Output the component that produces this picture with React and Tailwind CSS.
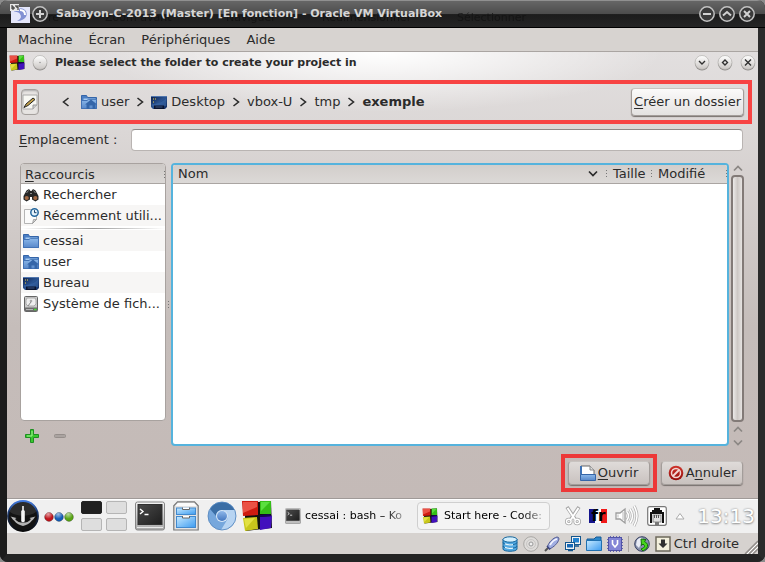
import React from "react";

function Svg({ w = 16, h = 16, vw = w, vh = h, children }) {
  return (
    <svg width={w} height={h} viewBox={`0 0 ${vw} ${vh}`} className="block shrink-0" aria-hidden="true">
      {children}
    </svg>
  );
}

function Gradients() {
  return (
    <svg width="0" height="0" className="absolute" aria-hidden="true">
      <defs>
        <linearGradient id="blue" x2="0" y2="1"><stop stopColor="#8db9ea" /><stop offset="1" stopColor="#5888ca" /></linearGradient>
        <linearGradient id="screen" x2="1" y2="1"><stop stopColor="#0b1f4d" /><stop offset=".5" stopColor="#2a5391" /><stop offset="1" stopColor="#10295c" /></linearGradient>
        <linearGradient id="knob" x2="0" y2="1"><stop stopColor="#ffffff" /><stop offset="1" stopColor="#c9c5c2" /></linearGradient>
        <linearGradient id="sky" x2="1" y2="1"><stop stopColor="#c8eaff" /><stop offset="1" stopColor="#3c9bf0" /></linearGradient>
        <linearGradient id="metal" x2="0" y2="1"><stop stopColor="#f4f4f4" /><stop offset="1" stopColor="#a8a8a8" /></linearGradient>
        <linearGradient id="ring" x2="0" y2="1"><stop stopColor="#2a68d8" /><stop offset=".5" stopColor="#16294c" /><stop offset="1" stopColor="#0a0a0a" /></linearGradient>
        <linearGradient id="termglass" x2="1" y2="1"><stop stopColor="#4a4a4a" /><stop offset="1" stopColor="#1e1e1e" /></linearGradient>
        <linearGradient id="red" x2="0" y2="1"><stop stopColor="#d0342c" /><stop offset="1" stopColor="#930d0a" /></linearGradient>
        <linearGradient id="hub" x2="0" y2="1"><stop stopColor="#8fb8ea" /><stop offset="1" stopColor="#4477c0" /></linearGradient>
        <radialGradient id="gloss" cx=".4" cy=".2" r=".6"><stop stopColor="#ffffff" stopOpacity=".6" /><stop offset="1" stopColor="#ffffff" stopOpacity="0" /></radialGradient>
      </defs>
    </svg>
  );
}

const Chevron = ({ dir = "right" }) => (
  <Svg w={8} h={10}>
    <path d={dir === "right" ? "M1.500 1L6.500 5L1.500 9" : "M6.500 1L1.500 5L6.500 9"} fill="none" stroke="#2b2b2b" strokeWidth="1.600" />
  </Svg>
);

const Caret = ({ up, color = "#8b8784" }) => (
  <Svg w={10} h={7}><path d={up ? "M1 5.500L5 1.500L9 5.500" : "M1 1.500L5 5.500L9 1.500"} fill="none" stroke={color} strokeWidth="1.700" /></Svg>
);

const Folder = ({ home }) => (
  <Svg>
    <path d="M.5 1.500h5l1 2h9v11H.5z" fill="#4a7ec4" stroke="#3565a8" />
    <path d="M2.500 4.500h12v3h-12z" fill="#a8ccf2" />
    <path d="M.5 6.500h5.500l1.500-1.200h8v9.200H.5z" fill="url(#blue)" stroke="#4272b5" />
    {home && <path d="M4 10.500l6-5 6 5h-1.500V15h-3v-3.500h-3V15h-3v-4.500z" fill="#3566a9" />}
  </Svg>
);

const Desktop = () => (
  <Svg>
    <path d="M0 2h16v11l-2 2H2l-2-2z" fill="url(#screen)" />
    <path d="M0 2.500h16" stroke="#5176ad" />
    <path d="M2 5h1M4 5h1M2 8h1" stroke="#f1d54c" />
    <path d="M1 10C7 10 12 8 15 4v8H1z" fill="#3d6db0" opacity=".5" />
    <path d="M3 11.500h10V15H3z" fill="#0a1430" /><path d="M4.500 13h7" stroke="#3a5583" />
  </Svg>
);

const Drive = () => (
  <Svg>
    <rect x="1.500" y=".5" width="13" height="15" rx="1" fill="#c9c9c9" stroke="#666" />
    <path d="M4 2h8l1 2v4l-2 2H5L3 8V4z" fill="#efefef" stroke="#aaa" />
    <circle cx="8" cy="5" r="1.300" fill="#aaa" /><path d="M8 6l-3 4" stroke="#888" />
    <path d="M2 11.500h12V15H2z" fill="#6d6d6d" /><path d="M3 13.500h7" stroke="#b5b5b5" /><path d="M11 13.500h2.500" stroke="#45e030" strokeWidth="1.500" />
  </Svg>
);

const Binoculars = () => (
  <Svg>
    <path d="M3.500 3.500L6 2l1.500 2h1L10 2l2.500 1.500L15.500 9v3.500l-3 2-3.500-2V10H7v2.500l-3.500 2-3-2V9z" fill="#272727" />
    <ellipse cx="3.700" cy="11" rx="2.100" ry="2" fill="#a36a45" /><ellipse cx="12.300" cy="11" rx="2.100" ry="2" fill="#a36a45" />
    <path d="M3.500 6l2-2.500M10.500 3.500l2 2.500M7 6.500h2" stroke="#8a8a8a" />
  </Svg>
);

const Recent = () => (
  <Svg>
    <path d="M1.500 1.500h12v10l-4 4h-8z" fill="#fbfbfb" stroke="#b5b5b5" />
    <path d="M13.500 11.500h-3l-1 4z" fill="#d4d4d4" stroke="#8c8c8c" strokeWidth=".7" />
    <circle cx="11.500" cy="4.500" r="3.700" fill="#e6f3fc" stroke="#28699f" strokeWidth="1.500" />
    <path d="M11.500 2.200v2.500h2" stroke="#153e66" fill="none" />
  </Svg>
);

const Blocks = ({ s = 16 }) => (
  <Svg w={s} h={s} vw={32} vh={32}>
    <path d="M3 3l27-2 1 27-26 3z" fill="#111" />
    <path d="M1 1h16v14L2 16z" fill="#cf1b10" /><path d="M2 2h14v5L2 13z" fill="#ea5245" />
    <path d="M19 1h11v13H19z" fill="#35be17" /><path d="M20 2h9l-9 9z" fill="#59df3e" />
    <path d="M2 18l14-1 1 12-13 2z" fill="#c8c71b" /><path d="M3 19l11-1L5 28z" fill="#e2e142" />
    <path d="M19 17l12-1-1 12-11 2z" fill="#4210bd" /><path d="M19 17l12-1-3-2-9 1z" fill="#16065a" />
  </Svg>
);

const Terminal = ({ s = 30 }) => (
  <Svg w={s} h={s} vw={30} vh={30}>
    <rect x=".5" y="1" width="29" height="28" rx="2" fill="url(#metal)" stroke="#858585" />
    <rect x="3" y="3.500" width="24" height="20" fill="url(#termglass)" stroke="#303030" />
    <path d="M5 8l3 2.500L5 13M9.500 13.500h4" fill="none" stroke="#fff" strokeWidth="1.400" />
    <path d="M2 26.500h26" stroke="#e9e9e9" />
  </Svg>
);

const Sabayon = () => (
  <Svg w={32} h={32}>
    <circle cx="16" cy="16" r="15" fill="#131313" stroke="url(#ring)" strokeWidth="1.800" />
    <path d="M3 12a13 13 0 0 1 26 0c-7 5-19 5-26 0z" fill="#fff" opacity=".1" />
    <path d="M15.200 6h1.600v4l1 1v10c0 1.500-3.600 1.500-3.600 0V11l1-1z" fill="#f6f6f6" />
    <path d="M3.500 16.500l6 1.500-1.500 1c2 3 5 3.500 8 3.500s6-.5 8-3.500l-1.500-1 6-1.500c-1.500 1.500-2 3-3.500 4-2.500 3.500-6 4.500-9 5.500-3-1-6.500-2-9-5.500-1.500-1-2-2.500-3.500-4z" fill="#b4b4b4" />
  </Svg>
);

const Ball = ({ c }) => (
  <Svg w={10} h={10}><circle cx="5" cy="5" r="4.400" fill={c} stroke="#0005" strokeWidth=".8" /><circle cx="5" cy="4.500" r="4" fill="url(#gloss)" /></Svg>
);

const Cabinet = () => (
  <Svg w={26} h={30}>
    <path d="M4.500.8h17l3.700 4V29H.8V4.800z" fill="#e3e3e3" stroke="#777" strokeWidth="1.200" />
    <path d="M5 2h16l2.500 3h-21z" fill="#fbfbfb" />
    <rect x="3.500" y="7" width="19" height="6.500" fill="url(#sky)" stroke="#4289cd" /><rect x="3.500" y="15.500" width="19" height="11" fill="url(#sky)" stroke="#4289cd" />
    <path d="M9.500 6.500v2h7v-2M9.500 15v2h7v-2" fill="#fff" stroke="#666" />
  </Svg>
);

const Chromium = () => (
  <Svg w={30} h={30}>
    <circle cx="15" cy="15" r="14" fill="#76a7dc" />
    <path d="M3 8A14 14 0 0 1 27.500 9L15 9c-4 0-6 3-6 6z" fill="#3b6ea5" />
    <path d="M27.500 9a14 14 0 0 1-13.500 20l6-10c2-4 0-8-4-10z" fill="#b7d4f2" />
    <circle cx="15" cy="15" r="6" fill="#d9e8f7" /><circle cx="15" cy="15" r="5" fill="url(#hub)" />
    <circle cx="15" cy="15" r="14" fill="none" stroke="#5183bb" strokeWidth=".8" />
  </Svg>
);

const Scissors = () => (
  <Svg w={16} h={20}>
    <g fill="none">
      <path d="M2 1l8 12M14 1L6 13" stroke="#a7a7a7" strokeWidth="3.600" />
      <circle cx="3.800" cy="15.500" r="2.300" stroke="#a7a7a7" strokeWidth="3" /><circle cx="12.200" cy="15.500" r="2.300" stroke="#a7a7a7" strokeWidth="3" />
      <path d="M2.500 2l7.500 11.500M13.500 2L6 13.500" stroke="#fff" strokeWidth="1.900" />
      <circle cx="3.800" cy="15.500" r="2.300" stroke="#fff" strokeWidth="1.400" /><circle cx="12.200" cy="15.500" r="2.300" stroke="#fff" strokeWidth="1.400" />
    </g>
  </Svg>
);

const Speaker = () => (
  <Svg w={24} h={24}>
    <path d="M1 9h4l5-4v14l-5-4H1z" fill="#fff" stroke="#9d9d9d" strokeWidth="1.300" /><path d="M3 10.500v3M8 8v8" stroke="#bbb" />
    <g fill="none"><path d="M12 8q3 4 0 8M15 5q5 7 0 14M19 2q6 10 0 20" stroke="#b0b0b0" strokeWidth="3" /><path d="M12 8q3 4 0 8M15 5q5 7 0 14M19 2q6 10 0 20" stroke="#fff" strokeWidth="1.500" /></g>
  </Svg>
);

const Network = () => (
  <Svg w={20} h={22}>
    <rect x=".7" y="1.700" width="18.600" height="18.600" rx="2" fill="#fff" stroke="#777" strokeWidth="1.200" />
    <path d="M7 3h6v2h2v2h2v11h-2V9H5v9H3V7h2V5h2z" fill="#111" />
    <rect x="6" y="10" width="8" height="7" fill="#e0e0e0" stroke="#888" /><path d="M7.500 10v3M9.500 10v3M11.500 10v3" stroke="#555" />
    <path d="M8 17h4v4H8z" fill="#777" />
  </Svg>
);

const Disks = () => (
  <Svg><path d="M1 3v10c0 3 14 3 14 0V3" fill="#54aae3" stroke="#17669c" /><ellipse cx="8" cy="3.500" rx="7" ry="2.700" fill="#d3effd" stroke="#17669c" /><path d="M1 6.500c0 3 14 3 14 0M1 10c0 3 14 3 14 0" fill="none" stroke="#17669c" /><path d="M3 7.800q4 1.500 8 .8M3 11.300q4 1.500 8 .8" fill="none" stroke="#e3f6ff" strokeWidth="1.300" /></Svg>
);
const Disc = () => (
  <Svg><circle cx="8" cy="8" r="7.300" fill="#dedcda" stroke="#a9a7a5" /><circle cx="8" cy="8" r="4.500" fill="none" stroke="#c8c6c4" /><circle cx="8" cy="8" r="2" fill="#f0f0f0" stroke="#999" /></Svg>
);
const Usb = () => (
  <Svg><path d="M1 15l4-4" stroke="#555" strokeWidth="2" /><path d="M3.500 10.500C5 6 9 2 13 1q2 0 2 2c-1 4-5 8-9.500 10z" fill="#a0aee2" stroke="#515a91" /><path d="M6 9q3-5 7-6" stroke="#f4f5ff" fill="none" strokeWidth="1.800" /><path d="M3 10l3 3.500" stroke="#3e467e" strokeWidth="1.500" /></Svg>
);
const Screens = () => (
  <Svg><rect x="6.500" y=".5" width="9" height="8" fill="#f3f3f3" stroke="#15568d" /><rect x="8" y="2" width="6" height="4.500" fill="#2583d0" /><rect x=".5" y="6.500" width="9" height="7" fill="#f3f3f3" stroke="#15568d" /><rect x="2" y="8" width="6" height="3.500" fill="#1768b5" /><path d="M3 14.500h5M10 10h4" stroke="#15568d" strokeWidth="1.500" /></Svg>
);
const Shared = () => (
  <Svg><path d="M1 14V3h7l2-2h5v13z" fill="#2c87ca" stroke="#165a96" /><path d="M.5 4.500h15v10H.5z" fill="url(#sky)" stroke="#2070b0" /></Svg>
);
const Chip = () => (
  <Svg><path d="M3.500 0v16M6.500 0v16M9.500 0v16M12.500 0v16M0 3.500h16M0 6.500h16M0 9.500h16M0 12.500h16" stroke="#6465ad" /><rect x="1.500" y="1.500" width="13" height="13" fill="#8385d6" stroke="#5153a5" /><path d="M5.500 4v4L8 11l2.500-3V4" fill="none" stroke="#fff" strokeWidth="1.600" /></Svg>
);
const Mouse = () => (
  <Svg><circle cx="8" cy="8" r="7.300" fill="#8992ae" stroke="#394262" /><path d="M3 4Q7 0 9 3L5 12 2 9z" fill="#e8ebf5" /><path d="M7 3l5 .5-1.500 2q5 2.500 2 7L9 15l-2-2q6-2 2-5L7.500 9.500z" fill="#46d51d" stroke="#14710b" /></Svg>
);
const HostKey = () => (
  <Svg><rect x="1" y="1" width="14" height="14" fill="#f3f0dd" stroke="#6d695c" strokeWidth="1.500" /><path d="M6 3.500h4v4h2.500L8 12 3.500 7.500H6z" fill="#303030" /></Svg>
);

function OuterButton({ label, d }) {
  return (
    <button aria-label={label} className="grid size-4 place-items-center rounded-full">
      <Svg><circle cx="8" cy="8" r="7.200" fill="#3b3b3b" stroke="#c2c2c2" strokeWidth="1.500" /><path d={d} fill="none" stroke="#d2d2d2" strokeWidth="2" /></Svg>
    </button>
  );
}

function RoundButton({ label, d }) {
  return (
    <button aria-label={label} className="grid size-4 place-items-center">
      <Svg><circle cx="8" cy="8.500" r="7" fill="#8d8a88" /><circle cx="8" cy="7.500" r="7" fill="url(#knob)" stroke="#aaa7a5" strokeWidth=".6" />{d ? <path d={d} fill="none" stroke="#303030" strokeWidth="1.400" /> : <circle cx="8" cy="7.500" r=".7" fill="#888" />}</Svg>
    </button>
  );
}

const Dots = () => (
  <span className="flex flex-col gap-0.5" aria-hidden="true">
    {[0, 1, 2].map((i) => <span key={i} className="size-px bg-[#777]" />)}
  </span>
);

const pushButton = "flex items-center justify-center rounded border border-[#a39d9a] border-t-[#c8c3c0] bg-linear-to-b shadow-[0_1px_1px_#77706d]";

function TitleBar() {
  return (
    <header className="relative flex h-7 shrink-0 items-center gap-1 border-b border-black bg-[linear-gradient(#686868,#4d4d4d_50%,#1c1c1c_54%,#252525)] px-2.5 shadow-[inset_0_1px_#909090]">
      <div className="absolute inset-x-0 top-2.5 flex text-[11px] text-[#101010] opacity-70" aria-hidden="true">
        <span className="w-[105px] pl-12">re</span><span className="w-[121px]">Zoom avant</span><span className="w-24">Naviguer</span><span className="w-[135px]">Redimensionner</span><span>Sélectionner</span>
      </div>
      <div className="relative flex min-w-0 grow items-center gap-0.5">
        <Svg w={20} h={20}>
          <path d="M1 3h19v16H1z" fill="#e4e6fa" /><path d="M4 7q7-5 11-1c4 4 1 11-8 11q6-3 3-7c-2-3-5-1-6-3z" fill="#8291d3" /><path d="M10 6q5 0 5 5" fill="none" stroke="#fff" strokeWidth="2" />
          <path d="M0 0h9v7H0z" fill="#e7e7e7" /><path d="M2 1v4h2V3H2M6 1v2h2M8 1v5" stroke="#222" fill="none" />
        </Svg>
        <OuterButton label="Toutes les fenêtres" d="M4 8h8M8 4v8" />
        <h1 className="truncate pl-1.5 text-[11px] font-bold text-[#d6d6d6]">Sabayon-C-2013 (Master) [En fonction] - Oracle VM VirtualBox</h1>
      </div>
      <div className="relative -mr-1 flex gap-1 pr-1">
        <OuterButton label="Réduire" d="M4 8h8" /><OuterButton label="Agrandir" d="M4 9.500L8 6l4 3.500" /><OuterButton label="Fermer" d="M5 5l6 6M11 5l-6 6" />
      </div>
    </header>
  );
}

function Crumb({ icon, children, current }) {
  return <button className={current ? "font-bold" : "flex items-center gap-1"}>{icon}{children}</button>;
}

function PathBar() {
  return (
    <div className="mx-1.5 flex h-11 items-center border-4 border-[#f74343] pr-1 pl-1">
      <button aria-label="Saisir un nom de fichier" className="grid h-[26px] w-[18px] place-items-center rounded border border-[#a5a09d] bg-[#e7e4e2] shadow-[inset_0_1px_2px_#aaa]">
        <Svg><path d="M1 1h14v10l-4 4H1z" fill="#f8f8f3" stroke="#aaa" /><path d="M15 11h-4v4" fill="#ccc" stroke="#999" /><path d="M2 13.500l2-3.500 7-6 2 1.500-7 6z" fill="#c5a34a" stroke="#242424" /></Svg>
      </button>
      <nav className="flex min-w-0 grow items-center gap-[7px] pl-[23px]" aria-label="Chemin">
        <button aria-label="Précédent" className="mr-1"><Chevron dir="left" /></button>
        <Crumb icon={<Folder home />}>user</Crumb><Chevron />
        <Crumb icon={<Desktop />}>Desktop</Crumb><Chevron />
        <Crumb>vbox-U</Crumb><Chevron />
        <Crumb>tmp</Crumb><Chevron />
        <Crumb current>exemple</Crumb>
      </nav>
      <button className={`${pushButton} h-7 shrink-0 from-[#fbfafa] to-[#e4e2e1] px-0.5 whitespace-nowrap`}><span><u className="underline-offset-2">C</u>réer un dossier</span></button>
    </div>
  );
}

const places = [
  { name: "Rechercher", icon: <Binoculars /> },
  { name: "Récemment utili...", icon: <Recent />, shade: true },
  { name: "cessai", icon: <Folder />, shade: true, rule: true },
  { name: "user", icon: <Folder home /> },
  { name: "Bureau", icon: <Desktop />, shade: true },
  { name: "Système de fich...", icon: <Drive /> },
];

function Places() {
  return (
    <aside className="flex w-[146px] shrink-0 flex-col">
      <div className="grow overflow-hidden rounded border border-[#a8a29f] bg-white">
        <div className="flex h-5 items-center justify-between border-b border-[#aaa5a2] bg-linear-to-b from-[#cdc9c6] to-[#dcd9d7] pt-0.5 pl-1"><span><u className="underline-offset-2">R</u>accourcis</span><Dots /></div>
        <ul>
          {places.map((p) => (
            <li key={p.name}>
              {p.rule && <div className="h-1 bg-[linear-gradient(90deg,#fff,#999_50%,#fff)] bg-[length:100%_1px] bg-center bg-no-repeat" />}
              <button className={`flex h-[21px] w-full items-center gap-1 pl-0.5 whitespace-nowrap ${p.shade ? "bg-[#f7f6f5]" : ""}`}>{p.icon}{p.name}</button>
            </li>
          ))}
        </ul>
      </div>
      <div className="flex h-[25px] items-center gap-3 pt-1 pl-1">
        <button aria-label="Ajouter"><Svg><path d="M6.500 1.500h3v5h5v3h-5v5h-3v-5h-5v-3h5z" fill="#39c82f" stroke="#1f8e22" /><path d="M8 3v5H3" stroke="#a1f38f" fill="none" /></Svg></button>
        <button aria-label="Supprimer"><Svg><rect x="2.500" y="6.500" width="11" height="3" rx="1" fill="#aaa3a0" stroke="#958e8b" /></Svg></button>
      </div>
    </aside>
  );
}

function FileList() {
  return (
    <div className="min-w-0 grow overflow-hidden rounded border-2 border-[#55b3dd] bg-white">
      <table className="w-full table-fixed border-collapse text-left">
        <thead className="bg-linear-to-b from-[#d2cecb] to-[#dcd9d7]">
          <tr className="h-[18px] border-b border-[#aaa5a2]">
            <th className="p-0 pl-[5px] font-normal"><span className="flex items-center justify-between leading-4">Nom<span className="flex items-center gap-2"><Caret color="#2b2b2b" /><Dots /></span></span></th>
            <th className="w-[45px] p-0 pl-1.5 font-normal"><span className="flex items-center justify-between leading-4">Taille<Dots /></span></th>
            <th className="w-[75px] p-0 pl-1.5 font-normal"><span className="flex items-center justify-between leading-4">Modifié<Dots /></span></th>
          </tr>
        </thead>
        <tbody />
      </table>
    </div>
  );
}

function ScrollBar() {
  return (
    <div className="ml-0.5 flex w-[13px] shrink-0 flex-col items-center pt-0.5">
      <Caret up />
      <div className="mt-[3px] w-full grow rounded border-2 border-[#827a77] bg-[linear-gradient(90deg,#eceae9,#cdc8c5_50%,#e6e3e1)]" />
      <div className="flex h-6 flex-col justify-between pt-1"><Caret up /><Caret /></div>
    </div>
  );
}

function Dialog() {
  return (
    <main className="flex grow flex-col bg-[radial-gradient(ellipse_280px_60px_at_50%_0,#fff,#ffffff00),linear-gradient(#e2dfdf,#dbd7d6_80px,#c5bdba_275px,#c4bab7)]">
      <div className="flex h-7 items-start gap-[7px] px-0.5 pt-[3px]">
        <Blocks /><RoundButton label="Menu de la fenêtre" />
        <h2 className="grow text-[11px] leading-4 font-bold">Please select the folder to create your project in</h2>
        <div className="flex gap-[7px]"><RoundButton label="Réduire" d="M5 6l3 3 3-3" /><RoundButton label="Agrandir" d="M8 5l2.500 2.500L8 10 5.500 7.500z" /><RoundButton label="Fermer" d="M5 4.500l6 6M11 4.500l-6 6" /></div>
      </div>
      <PathBar />
      <div className="mt-[5px] flex items-center pr-[15px] pl-3">
        <label htmlFor="location" className="w-28"><u className="underline-offset-2">E</u>mplacement :</label>
        <input id="location" className="h-[22px] min-w-0 grow rounded border border-[#b9b4b2] border-t-[#8d8987] bg-white px-1 outline-none" />
      </div>
      <div className="mt-3 flex grow pr-3.5 pl-[13px]">
        <Places />
        <div className="grid w-[5px] shrink-0 place-items-center"><Dots /></div>
        <FileList />
        <ScrollBar />
      </div>
      <div className="mt-2 mb-1.5 flex items-center justify-end gap-1 pr-[15px]">
        <div className="border-4 border-[#ed3838] p-[3px]">
          <button className={`${pushButton} h-6 w-[82px] from-[#dfdbd9] to-[#c9c2bf]`}>
            <Svg><path d="M1 1h9l4 4v8H1z" fill="#fff" stroke="#666" /><path d="M10 1v4h4" fill="#ddd" stroke="#888" /><path d="M.5 9.500h15v6H.5z" fill="url(#blue)" stroke="#3565a8" /><path d="M1 1v8" stroke="#3f72b4" strokeWidth="2" /></Svg>
            <span className="pl-0.5"><u className="underline-offset-2">O</u>uvrir</span>
          </button>
        </div>
        <button className={`${pushButton} h-6 w-[82px] gap-0.5 from-[#dfdbd9] to-[#c9c2bf]`}>
          <Svg><circle cx="8" cy="8" r="7.300" fill="url(#red)" /><circle cx="8" cy="8" r="4.500" fill="none" stroke="#f3d6d3" strokeWidth="1.500" /><path d="M5 11l6-6" stroke="#f3d6d3" strokeWidth="2" /></Svg>
          <span>A<u className="underline-offset-2">n</u>nuler</span>
        </button>
      </div>
    </main>
  );
}

const fade = "overflow-hidden whitespace-nowrap [mask-image:linear-gradient(90deg,#000_78%,#0003)]";

function TaskBar() {
  return (
    <div className="flex h-[35px] shrink-0 items-center border-t border-[#a09a98] bg-[#f0f0f0] pr-[3px] text-[11px] text-black shadow-[inset_0_1px_#fff]">
      <button aria-label="Menu"><Sabayon /></button>
      <button className="ml-[5px] flex pt-0.5" aria-label="Activités"><Ball c="#c0141c" /><Ball c="#145db7" /><Ball c="#58a414" /></button>
      <div className="ml-[7px] grid shrink-0 grid-cols-[21px_21px] gap-x-1 gap-y-1">
        {[1, 2, 3, 4].map((n) => <button key={n} aria-label={`Bureau ${n}`} className={`h-[13px] rounded-xs border ${n === 1 ? "border-[#222] bg-[#202020]" : "border-[#b5b5b5] bg-[#dedede]"}`} />)}
      </div>
      <div className="ml-2 flex items-center gap-2"><button aria-label="Terminal"><Terminal /></button><button aria-label="Fichiers"><Cabinet /></button><button aria-label="Chromium"><Chromium /></button></div>
      <button className="ml-1 shrink-0" aria-label="Code::Blocks"><Blocks s={32} /></button>
      <button className="ml-3 flex w-[124px] shrink-0 items-center gap-1"><Terminal s={16} /><span className={`${fade} w-[102px] text-left`}>cessai : bash – Ko</span></button>
      <button className="ml-2 flex h-7 w-[133px] shrink-0 items-center gap-1.5 rounded border border-[#cfcfcf] bg-[#f4f4f4] pl-1"><Blocks /><span className={`${fade} w-[100px] text-left`}>Start here - Code:</span></button>
      <div className="flex grow items-center justify-end gap-2">
        <Scissors />
        <span className="w-[18px] bg-[linear-gradient(90deg,#14148c_33%,#fff_33%,#fff_66%,#f01818_66%)] text-center text-[15px] leading-[14px] font-bold">fr</span>
        <Speaker /><Network />
        <Svg w={10} h={8}><path d="M1 7L5 1.500 9 7z" fill="#fff" stroke="#aaa" /></Svg>
        <time className="pl-1 text-xl leading-6 text-white [text-shadow:0_0_2px_#888,0_1px_2px_#999]">13:13</time>
      </div>
    </div>
  );
}

function StatusBar() {
  return (
    <footer className="flex h-[21px] shrink-0 items-center justify-end gap-[5px] bg-[#d6d2cf]">
      <Disks /><Disc /><Usb /><Screens /><Shared /><Chip />
      <span className="h-4 w-px bg-[#aaa6a3]" />
      <Mouse />
      <span className="flex items-center gap-[3px]"><HostKey />Ctrl droite</span>
      <span className="self-end"><Svg w={14} h={14}><path d="M1 14L14 1M5 14l9-9M9 14l5-5" stroke="#918d8a" strokeWidth="1.500" /><path d="M3 14L14 3M7 14l7-7" stroke="#fff" /></Svg></span>
    </footer>
  );
}

export default function App() {
  return (
    <div className="bg-[#8c8c8c] font-['DejaVu_Sans',sans-serif] text-[13px] leading-4 text-[#2b2b2b]">
      <Gradients />
      <div className="flex min-h-screen flex-col overflow-hidden rounded-lg bg-[#242424]">
        <TitleBar />
        <div className="flex grow flex-col border-r-[7px] border-b-8 border-l-[7px] border-[#1c1c1c] border-r-[#2b2b2b] border-b-[#242424]">
          <nav className="flex h-6 shrink-0 items-center gap-4 border-b border-[#aaa5a2] bg-[#d7d3d0] px-[11px]" aria-label="Menu principal">
            <button>Machine</button><button>Écran</button><button>Périphériques</button><button>Aide</button>
          </nav>
          <Dialog />
          <TaskBar />
          <StatusBar />
        </div>
      </div>
    </div>
  );
}
